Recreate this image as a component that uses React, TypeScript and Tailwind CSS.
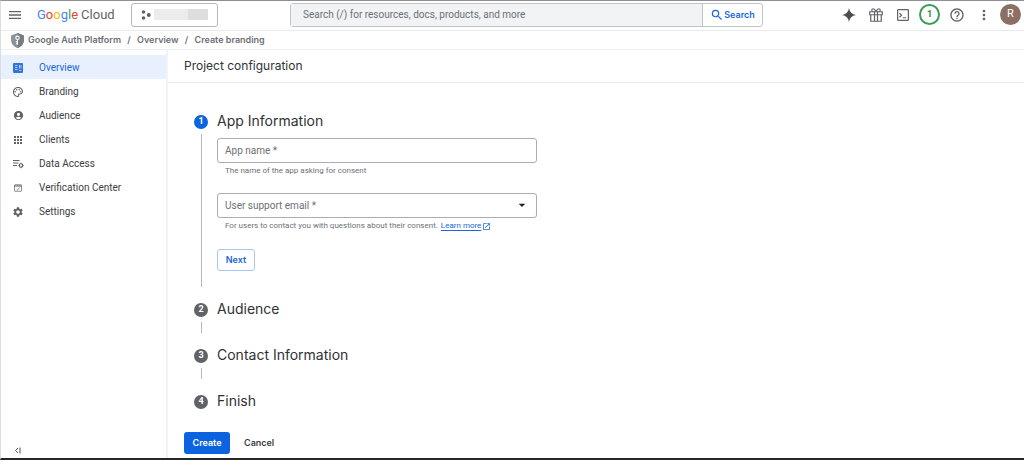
import type { ReactNode } from "react";
import {
  MdAccountCircle,
  MdApps,
  MdArrowDropDown,
  MdHelpOutline,
  MdMenu,
  MdMoreVert,
  MdOpenInNew,
  MdOutlinePalette,
  MdSearch,
  MdSettings,
} from "react-icons/md";

const HEADING = "font-['Inter','Liberation_Sans',sans-serif]";

function OverviewIcon() {
  return (
    <svg viewBox="0 0 20 20" className="size-[10px]">
      <rect width="20" height="20" rx="2" fill="#2f74dd" />
      <path
        d="M4 5h5M4 9h5M4 13h5M13 4v7M16 4v7M12 15h4.500"
        stroke="#d7e5fc"
        strokeWidth="1.600"
        fill="none"
      />
    </svg>
  );
}

function DataAccessIcon() {
  return (
    <svg viewBox="0 0 22 20" className="h-[10px] w-[11px]" fill="none" stroke="#5f6368">
      <path d="M0 3h13M0 8h11M0 13h8" strokeWidth="2" />
      <circle cx="16" cy="13" r="3.500" strokeWidth="2.400" />
      <path d="M16 7.500v2M16 16.500v2M10.500 13h2M19.500 13h2" strokeWidth="1.600" />
    </svg>
  );
}

function VerificationIcon() {
  return (
    <svg viewBox="0 0 16 16" className="size-2" fill="none" stroke="#6b6f74" strokeWidth="1.600">
      <rect x="1" y="1.500" width="14" height="13" rx="1" />
      <path d="M1 4h14" strokeWidth="2.400" />
      <path d="M5 9.500l2.200 2.200L11.500 7.500" />
    </svg>
  );
}

function ShieldIcon() {
  return (
    <svg viewBox="0 0 24 28" className="h-[15px] w-[13px]">
      <path d="M12 0L0 4.500V13c0 7 5 12.700 12 15 7-2.300 12-8 12-15V4.500z" fill="#8d9297" />
      <path d="M12 0v28c7-2.300 12-8 12-15V4.500z" fill="#777c81" />
      <circle cx="12" cy="9" r="3.200" fill="none" stroke="#fff" strokeWidth="2" />
      <path d="M12 12.500V22M12 16.500H9M12 20H9" stroke="#fff" strokeWidth="2" fill="none" />
    </svg>
  );
}

function ProjectIcon() {
  return (
    <svg viewBox="0 0 20 20" className="size-[10px]" fill="#5f6368">
      <circle cx="5" cy="4" r="3.600" />
      <circle cx="5" cy="16" r="3.600" />
      <circle cx="15.500" cy="10" r="4" />
    </svg>
  );
}

function SparkIcon() {
  return (
    <svg viewBox="0 0 24 24" className="size-[14px]" fill="#4a4d51">
      <path d="M12 0c1 7 5 11 12 12-7 1-11 5-12 12-1-7-5-11-12-12 7-1 11-5 12-12z" />
    </svg>
  );
}

function GiftIcon() {
  return (
    <svg viewBox="0 0 28 28" className="size-[14px]" fill="none" stroke="#5f6368" strokeWidth="2.400">
      <path d="M1.500 7.500h25v6h-25zM3.500 13.500h21v13h-21zM11 7.500v19M17 7.500v19" />
      <path d="M14 7.500C12 3 10.500 1.500 8.500 1.500a3 3 0 0 0 0 6M14 7.500c2-4.500 3.500-6 5.500-6a3 3 0 0 1 0 6" />
    </svg>
  );
}

function ShellIcon() {
  return (
    <svg viewBox="0 0 24 24" className="size-3" fill="none" stroke="#5f6368" strokeWidth="2.400">
      <rect x="1.200" y="1.200" width="21.600" height="21.600" rx="1.500" />
      <path d="M5 8.500l4 4-4 4M11.500 17.500H18" />
    </svg>
  );
}

function CollapseIcon() {
  return (
    <svg viewBox="0 0 14 14" className="size-[7px]" fill="none" stroke="#4a4d51" strokeWidth="2">
      <path d="M8 2L3 7l5 5M12 1v12" />
    </svg>
  );
}

const NAV: { label: string; icon: ReactNode }[] = [
  { label: "Overview", icon: <OverviewIcon /> },
  { label: "Branding", icon: <MdOutlinePalette className="size-3" /> },
  { label: "Audience", icon: <MdAccountCircle className="size-[11px]" /> },
  { label: "Clients", icon: <MdApps className="size-3" /> },
  { label: "Data Access", icon: <DataAccessIcon /> },
  { label: "Verification Center", icon: <VerificationIcon /> },
  { label: "Settings", icon: <MdSettings className="size-3" /> },
];

const CRUMBS = ["Google Auth Platform", "Overview", "Create branding"];

const TOOLS: { label: string; icon: ReactNode }[] = [
  { label: "Gemini", icon: <SparkIcon /> },
  { label: "Free trial", icon: <GiftIcon /> },
  { label: "Cloud Shell", icon: <ShellIcon /> },
  {
    label: "Notifications",
    icon: (
      <span className="flex size-[21px] items-center justify-center rounded-full border-2 border-[#3c9c58] text-[9px] font-bold text-[#1e8e3e]">
        1
      </span>
    ),
  },
  { label: "Help", icon: <MdHelpOutline className="size-4" /> },
  { label: "More", icon: <MdMoreVert className="size-4" /> },
  {
    label: "Account",
    icon: (
      <span className="flex size-[21px] items-center justify-center rounded-full bg-[#8d6e63] text-[11px] text-white">
        R
      </span>
    ),
  },
];

function TopBar() {
  return (
    <header className="flex h-[30px] items-center border-b border-[#e8eaed] pb-[2px] text-[#5f6368]">
      <button aria-label="Menu" className="ml-[6px] flex w-4 justify-center">
        <MdMenu className="size-4" />
      </button>
      <a
        href="#"
        className="ml-[14px] flex w-[94px] gap-[3px] text-[13px] leading-5 whitespace-nowrap"
      >
        <span>
          <span className="text-[#4285f4]">G</span>
          <span className="text-[#ea4335]">o</span>
          <span className="text-[#fbbc04]">o</span>
          <span className="text-[#4285f4]">g</span>
          <span className="text-[#34a853]">l</span>
          <span className="text-[#ea4335]">e</span>
        </span>
        <span>Cloud</span>
      </a>
      <button
        aria-label="Select a project"
        className="flex h-6 w-[87px] items-center gap-[3px] rounded-[3px] border border-[#b5b8bc] pl-[9px]"
      >
        <ProjectIcon />
        <span className="flex h-[11px] w-[54px]">
          <span className="flex-1 bg-[#ececec]" />
          <span className="w-5 bg-[#dedede]" />
        </span>
      </button>
      <form className="mr-[72px] ml-[72px] flex h-6 flex-1 rounded-[3px] border border-[#c0c3c7]">
        <input
          aria-label="Search"
          placeholder="Search (/) for resources, docs, products, and more"
          className="min-w-0 flex-1 bg-[#f1f3f4] px-3 text-[10px] outline-none placeholder:text-[#6c7075]"
        />
        <button
          type="button"
          className={`flex w-[60px] items-center justify-center border-l border-[#c0c3c7] text-[9px] font-semibold text-[#1a67d8] ${HEADING}`}
        >
          <MdSearch className="size-[14px]" />
          Search
        </button>
      </form>
      <div className="flex">
        {TOOLS.map((t) => (
          <button
            key={t.label}
            aria-label={t.label}
            className="flex h-6 w-[27px] items-center justify-center"
          >
            {t.icon}
          </button>
        ))}
      </div>
    </header>
  );
}

function Step({
  n,
  title,
  active = false,
  last = false,
  children,
}: {
  n: number;
  title: string;
  active?: boolean;
  last?: boolean;
  children?: ReactNode;
}) {
  return (
    <li className="flex gap-[9px]">
      <div className="flex w-[14px] flex-col items-center">
        <span
          className={`flex size-[14px] shrink-0 items-center justify-center rounded-full text-[9px] font-bold text-white ${
            active ? "bg-[#0b63e0]" : "bg-[#5f6368]"
          }`}
        >
          {n}
        </span>
        {!last && <span className="mt-[5px] mb-4 w-px flex-1 bg-[#b5b8bc]" />}
      </div>
      <div className={last ? "" : "min-h-[46px] min-w-0 flex-1"}>
        <h2 className={`-mt-1 text-[14px] leading-5 text-[#2f3236] ${HEADING}`}>{title}</h2>
        {children}
      </div>
    </li>
  );
}

export default function App() {
  return (
    <div className="flex min-h-screen flex-col border-t border-b-2 border-l border-t-[#8f8f94] border-b-[#252525] border-l-[#dadce0] bg-white font-['Roboto','Liberation_Sans',sans-serif] text-[10px] text-[#3c4043]">
      <TopBar />
      <nav
        aria-label="Breadcrumb"
        className={`flex h-[19px] items-center border-b border-[#eeeff1] pl-[10px] text-[9px] font-semibold text-[#6c7075] ${HEADING}`}
      >
        <ShieldIcon />
        <ol className="ml-1 flex">
          {CRUMBS.map((c, i) => (
            <li key={c} className="flex">
              {i > 0 && <span className="w-4 text-center">/</span>}
              <a href="#">{c}</a>
            </li>
          ))}
        </ol>
      </nav>

      <div className="flex flex-1">
        <aside className="flex w-[167px] flex-col border-r-2 border-[#f1f3f4] pt-[5px]">
          {NAV.map((item, i) => (
            <a
              key={item.label}
              href="#"
              className={`flex h-6 items-center pt-px ${
                i === 0 ? "bg-[#e8f0fe] text-[#1a67d8]" : ""
              }`}
            >
              <span className={`ml-[9px] flex w-4 justify-center ${i === 0 ? "" : "text-[#5f6368]"}`}>
                {item.icon}
              </span>
              <span className="ml-[13px]">{item.label}</span>
            </a>
          ))}
          <button aria-label="Collapse menu" className="mt-auto mb-1 ml-[13px] w-[7px]">
            <CollapseIcon />
          </button>
        </aside>

        <main className="flex min-w-0 flex-1 flex-col">
          <h1
            className={`flex h-[33px] items-center border-b border-[#e8eaed] pl-4 text-[12px] text-[#2f3236] ${HEADING}`}
          >
            Project configuration
          </h1>

          <ol className="mt-8 pl-[26px]">
            <Step n={1} title="App Information" active>
              <div className="mt-[7px] w-80 max-w-full">
                <div className="relative">
                  <input
                    id="app-name"
                    className="block h-[25px] w-full rounded-[3px] border border-[#a9acb1] px-[7px] outline-none"
                  />
                  <label
                    htmlFor="app-name"
                    className="pointer-events-none absolute inset-y-0 left-2 flex items-center text-[#6c7075]"
                  >
                    App name *
                  </label>
                </div>
                <p className="mt-[2px] pl-2 text-[8px] leading-3 text-[#6c7075]">
                  The name of the app asking for consent
                </p>

                <div className="relative mt-4">
                  <select
                    id="support-email"
                    className="block h-[25px] w-full appearance-none rounded-[3px] border border-[#a9acb1] px-[7px]"
                  >
                    <option value="" />
                  </select>
                  <label
                    htmlFor="support-email"
                    className="pointer-events-none absolute inset-y-0 left-2 flex items-center text-[#6c7075]"
                  >
                    User support email *
                  </label>
                  <MdArrowDropDown className="pointer-events-none absolute top-1 right-[7px] size-4 text-[#202124]" />
                </div>
                <p className="mt-[2px] flex pl-2 text-[8px] leading-3 text-[#6c7075]">
                  For users to contact you with questions about their consent.
                  <a href="#" className="ml-[3px] flex items-center text-[#1a67d8]">
                    <span className="underline underline-offset-2">Learn more</span>
                    <MdOpenInNew className="ml-px size-[9px]" />
                  </a>
                </p>

                <button
                  className={`mt-[17px] mb-8 h-[22px] w-[38px] rounded-[3px] border border-[#a8c4f3] text-[9px] font-semibold text-[#1a67d8] ${HEADING}`}
                >
                  Next
                </button>
              </div>
            </Step>
            <Step n={2} title="Audience" />
            <Step n={3} title="Contact Information" />
            <Step n={4} title="Finish" last />
          </ol>

          <div className={`mt-[21px] mb-1 flex gap-[14px] pl-4 text-[9px] font-semibold ${HEADING}`}>
            <button className="h-[22px] w-[46px] rounded-[3px] bg-[#0b63e0] text-white">
              Create
            </button>
            <button>Cancel</button>
          </div>
        </main>
      </div>
    </div>
  );
}
